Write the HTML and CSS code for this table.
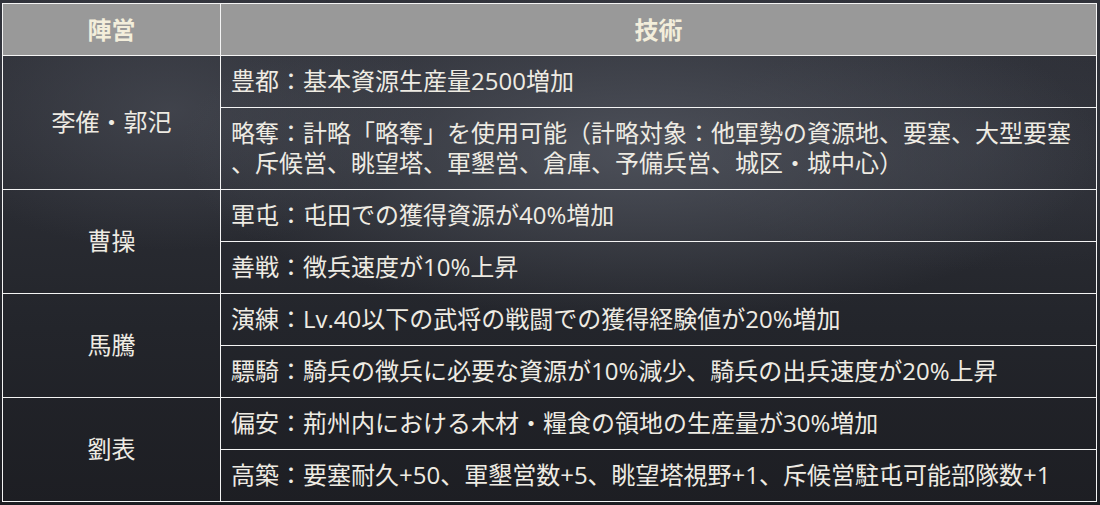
FILE: index.html
```html
<!DOCTYPE html>
<html lang="ja">
<head>
<meta charset="utf-8">
<title>陣営技術</title>
<link rel="stylesheet" href="styles.css">
</head>
<body>
<table class="tech">
  <colgroup>
    <col class="col-camp">
    <col class="col-tech">
  </colgroup>
  <thead>
    <tr><th>陣営</th><th>技術</th></tr>
  </thead>
  <tbody>
    <tr><td class="camp" rowspan="2">李傕・郭汜</td><td>豊都：基本資源生産量2500増加</td></tr>
    <tr><td>略奪：計略「略奪」を使用可能（計略対象：他軍勢の資源地、要塞、大型要塞、斥候営、眺望塔、軍墾営、倉庫、予備兵営、城区・城中心）</td></tr>
    <tr><td class="camp" rowspan="2">曹操</td><td>軍屯：屯田での獲得資源が40%増加</td></tr>
    <tr><td>善戦：徴兵速度が10%上昇</td></tr>
    <tr><td class="camp" rowspan="2">馬騰</td><td>演練：Lv.40以下の武将の戦闘での獲得経験値が20%増加</td></tr>
    <tr><td>驃騎：騎兵の徴兵に必要な資源が10%減少、騎兵の出兵速度が20%上昇</td></tr>
    <tr><td class="camp" rowspan="2">劉表</td><td>偏安：荊州内における木材・糧食の領地の生産量が30%増加</td></tr>
    <tr><td>高築：要塞耐久+50、軍墾営数+5、眺望塔視野+1、斥候営駐屯可能部隊数+1</td></tr>
  </tbody>
</table>
</body>
</html>
```

FILE: styles.css
```css
html, body {
  margin: 0;
  height: 100%;
  overflow: hidden;
}
body {
  padding: 3px 3px 0 2px;
  box-sizing: border-box;
  font-family: "Open Sans", "Noto Sans CJK JP", sans-serif;
  color: #eeebe3;
  background-color: #24262c;
  background-image:
    radial-gradient(ellipse 460px 170px at 640px 150px, rgba(88, 92, 102, 0.75), rgba(88, 92, 102, 0) 100%),
    radial-gradient(ellipse 260px 140px at 170px 110px, rgba(72, 75, 84, 0.7), rgba(72, 75, 84, 0) 100%),
    radial-gradient(ellipse 300px 120px at 980px 150px, rgba(60, 63, 72, 0.5), rgba(60, 63, 72, 0) 100%),
    linear-gradient(180deg, #30323a 0%, #2b2d34 35%, #23252b 65%, #1d1e23 100%);
}
.tech {
  width: 1095px;
  border-collapse: collapse;
  table-layout: fixed;
  font-size: 24px;
  line-height: 30px;
}
.col-camp { width: 218px; }
.tech th,
.tech td {
  border: 1px solid #f4f4f4;
  padding: 10px 10px 11px 10px;
  vertical-align: middle;
}
.tech th {
  background: #999999;
  color: #f3eedb;
  font-weight: bold;
  text-align: center;
  font-family: "Noto Sans CJK JP", sans-serif;
}
.tech td {
  text-align: left;
  line-break: anywhere;
}
.tech td.camp {
  text-align: center;
}
```
